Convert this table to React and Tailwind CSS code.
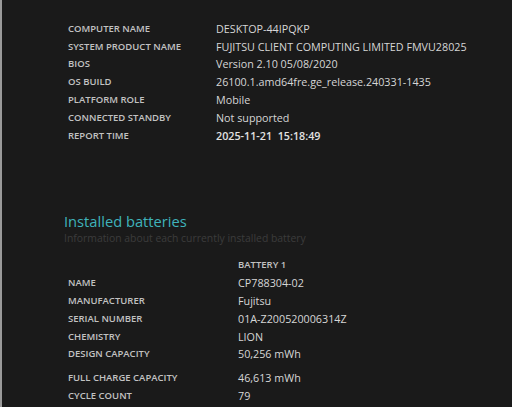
export default function App() {
  const sys = [
    ["COMPUTER NAME", "DESKTOP-44IPQKP"],
    ["SYSTEM PRODUCT NAME", "FUJITSU CLIENT COMPUTING LIMITED FMVU28025"],
    ["BIOS", "Version 2.10 05/08/2020"],
    ["OS BUILD", "26100.1.amd64fre.ge_release.240331-1435"],
    ["PLATFORM ROLE", "Mobile"],
    ["CONNECTED STANDBY", "Not supported"],
    ["REPORT TIME", "2025-11-21\u00a0\u00a015:18:49", true],
  ];
  const bat = [
    ["NAME", "CP788304-02"],
    ["MANUFACTURER", "Fujitsu"],
    ["SERIAL NUMBER", "01A-Z200520006314Z"],
    ["CHEMISTRY", "LION"],
    ["DESIGN CAPACITY", "50,256 mWh"],
  ];
  const bat2 = [
    ["FULL CHARGE CAPACITY", "46,613 mWh"],
    ["CYCLE COUNT", "79"],
  ];
  return (
    <div
      className="w-[512px] h-[407px] overflow-hidden bg-[#1a1a1a] border-l-2 border-[#9a9a9a] text-[#d6d6d6]"
      style={{ fontFamily: '"Open Sans", "Noto Sans", sans-serif' }}
    >
      <div className="pl-[66px] pt-[20px]">
        {sys.map(([k, v, b]) => (
          <div key={k} className="flex h-[17.8px] items-center">
            <div className="w-[148px] text-[9.5px] font-semibold text-[#c2c2c2]">{k}</div>
            <div className={"text-[10.75px] " + (b ? "font-semibold text-[#e2e2e2]" : "")}>{v}</div>
          </div>
        ))}
      </div>
      <div className="pl-[62px] pt-[67px]">
        <div className="text-[14.7px] leading-[18px] font-medium text-[#3fb3bb]">Installed batteries</div>
        <div className="text-[10.4px] leading-[16px] text-[#3c3c3c]">Information about each currently installed battery</div>
      </div>
      <div className="pl-[66px] pt-[11px]">
        <div className="flex h-[17.8px] items-center">
          <div className="w-[170px]"></div>
          <div className="text-[9.5px] font-semibold text-[#c2c2c2]">BATTERY 1</div>
        </div>
        {bat.map(([k, v]) => (
          <div key={k} className="flex h-[17.8px] items-center">
            <div className="w-[170px] text-[9.5px] font-semibold text-[#c2c2c2]">{k}</div>
            <div className="text-[10.75px]">{v}</div>
          </div>
        ))}
        <div className="h-[6px]"></div>
        {bat2.map(([k, v]) => (
          <div key={k} className="flex h-[17.8px] items-center">
            <div className="w-[170px] text-[9.5px] font-semibold text-[#c2c2c2]">{k}</div>
            <div className="text-[10.75px]">{v}</div>
          </div>
        ))}
      </div>
    </div>
  );
}
